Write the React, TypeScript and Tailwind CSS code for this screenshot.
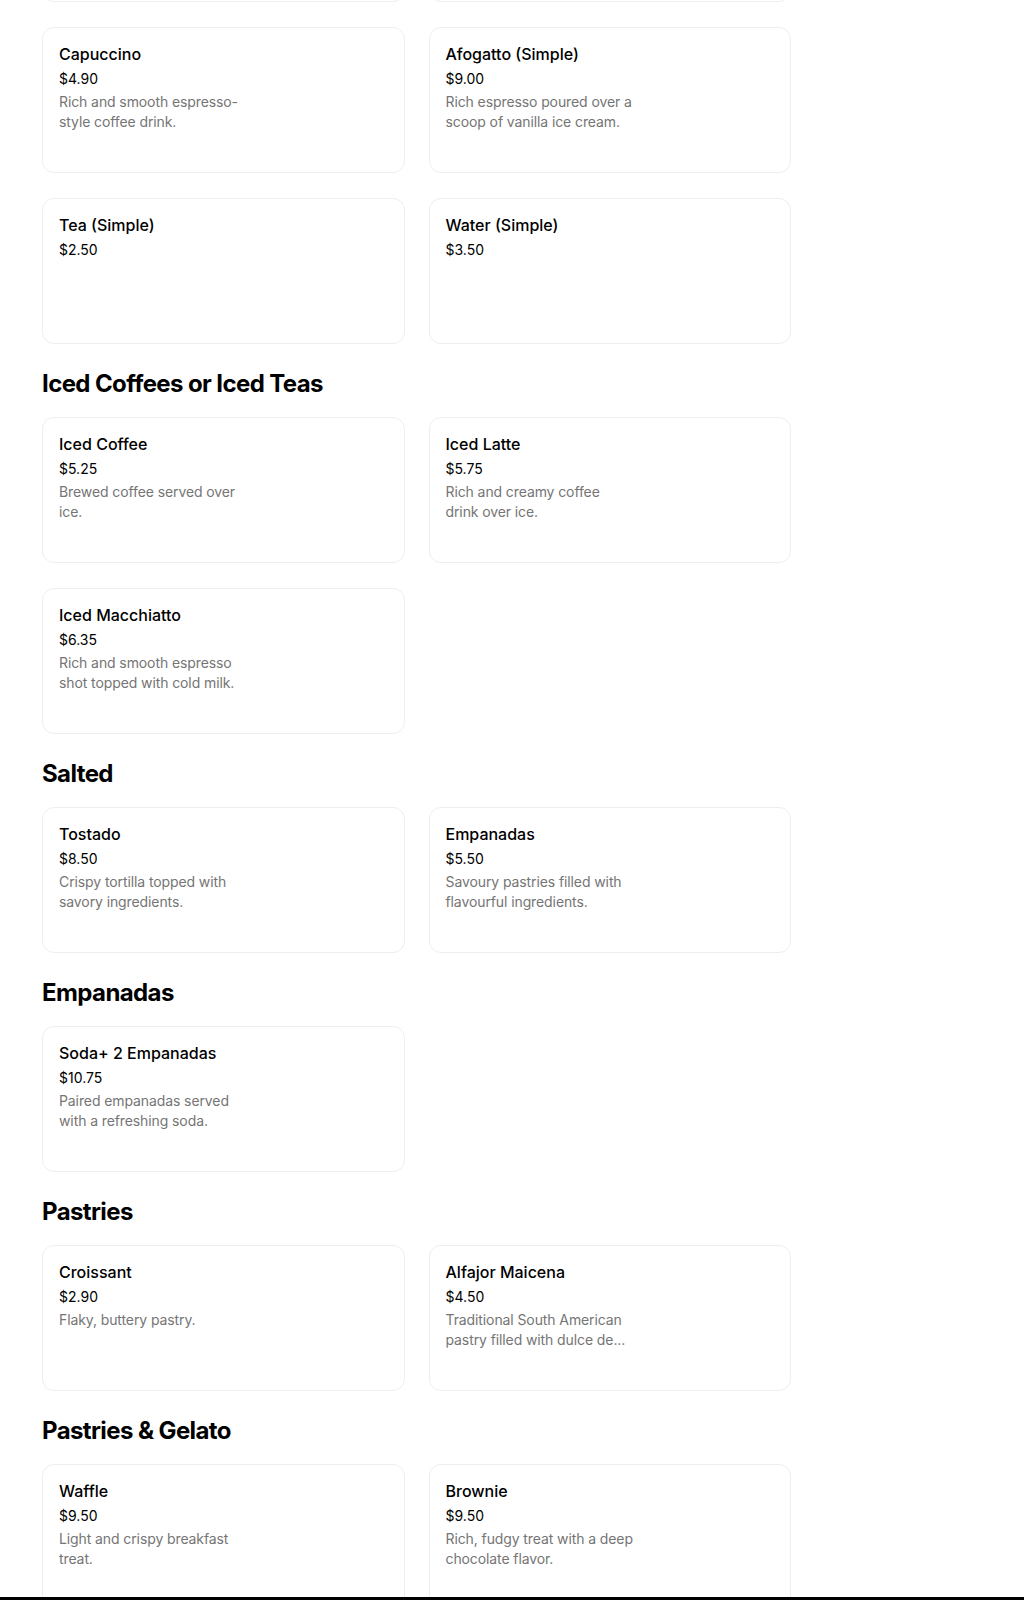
import React from "react";

type MenuItem = {
  name: string;
  price: string;
  lines?: string[];
};

type MenuSection = {
  title?: string;
  items: MenuItem[];
};

// first section continues from above the fold, so its first row is only
// visible as the bottom edge of two cards
const SECTIONS: MenuSection[] = [
  {
    items: [
      {
        name: "Capuccino",
        price: "$4.90",
        lines: ["Rich and smooth espresso-", "style coffee drink."],
      },
      {
        name: "Afogatto (Simple)",
        price: "$9.00",
        lines: ["Rich espresso poured over a", "scoop of vanilla ice cream."],
      },
      { name: "Tea (Simple)", price: "$2.50" },
      { name: "Water (Simple)", price: "$3.50" },
    ],
  },
  {
    title: "Iced Coffees or Iced Teas",
    items: [
      {
        name: "Iced Coffee",
        price: "$5.25",
        lines: ["Brewed coffee served over", "ice."],
      },
      {
        name: "Iced Latte",
        price: "$5.75",
        lines: ["Rich and creamy coffee", "drink over ice."],
      },
      {
        name: "Iced Macchiatto",
        price: "$6.35",
        lines: ["Rich and smooth espresso", "shot topped with cold milk."],
      },
    ],
  },
  {
    title: "Salted",
    items: [
      {
        name: "Tostado",
        price: "$8.50",
        lines: ["Crispy tortilla topped with", "savory ingredients."],
      },
      {
        name: "Empanadas",
        price: "$5.50",
        lines: ["Savoury pastries filled with", "flavourful ingredients."],
      },
    ],
  },
  {
    title: "Empanadas",
    items: [
      {
        name: "Soda+ 2 Empanadas",
        price: "$10.75",
        lines: ["Paired empanadas served", "with a refreshing soda."],
      },
    ],
  },
  {
    title: "Pastries",
    items: [
      { name: "Croissant", price: "$2.90", lines: ["Flaky, buttery pastry."] },
      {
        name: "Alfajor Maicena",
        price: "$4.50",
        lines: ["Traditional South American", "pastry filled with dulce de..."],
      },
    ],
  },
  {
    title: "Pastries & Gelato",
    items: [
      {
        name: "Waffle",
        price: "$9.50",
        lines: ["Light and crispy breakfast", "treat."],
      },
      {
        name: "Brownie",
        price: "$9.50",
        lines: ["Rich, fudgy treat with a deep", "chocolate flavor."],
      },
    ],
  },
];

function ItemCard({ item }: { item: MenuItem }) {
  return (
    <div className="h-[146px] rounded-xl border border-[#eeeeee] bg-white px-4 pt-4">
      <div className="text-[16px] leading-5 font-medium text-black">{item.name}</div>
      <div className="mt-[5px] text-[14px] leading-5 text-black">{item.price}</div>
      {item.lines && (
        <div className="mt-[3px] text-[14px] leading-5 tracking-[-0.1px] text-[#757575]">
          {item.lines.map((line) => (
            <div key={line}>{line}</div>
          ))}
        </div>
      )}
    </div>
  );
}

export default function App() {
  return (
    <div
      className="flex h-[1600px] flex-col overflow-hidden bg-white"
      style={{ fontFamily: "Inter, 'Liberation Sans', sans-serif" }}
    >
      <div className="min-h-0 flex-1 overflow-hidden pl-[42px]">
        <div className="w-[749px]">
          <div className="-mt-[144px] mb-[25px] grid grid-cols-2 gap-x-6" aria-hidden="true">
            <div className="h-[146px] rounded-xl border border-[#eeeeee]" />
            <div className="h-[146px] rounded-xl border border-[#eeeeee]" />
          </div>
          {SECTIONS.map((section, index) => (
            <section key={section.title ?? index}>
              {section.title && (
                <h2 className="mt-6 mb-[17px] text-[24px] leading-8 font-bold tracking-tight text-black">
                  {section.title}
                </h2>
              )}
              <div className="grid grid-cols-2 gap-x-6 gap-y-[25px]">
                {section.items.map((item) => (
                  <ItemCard key={item.name} item={item} />
                ))}
              </div>
            </section>
          ))}
        </div>
      </div>
      <div className="h-[3px] flex-shrink-0 bg-black" />
    </div>
  );
}
